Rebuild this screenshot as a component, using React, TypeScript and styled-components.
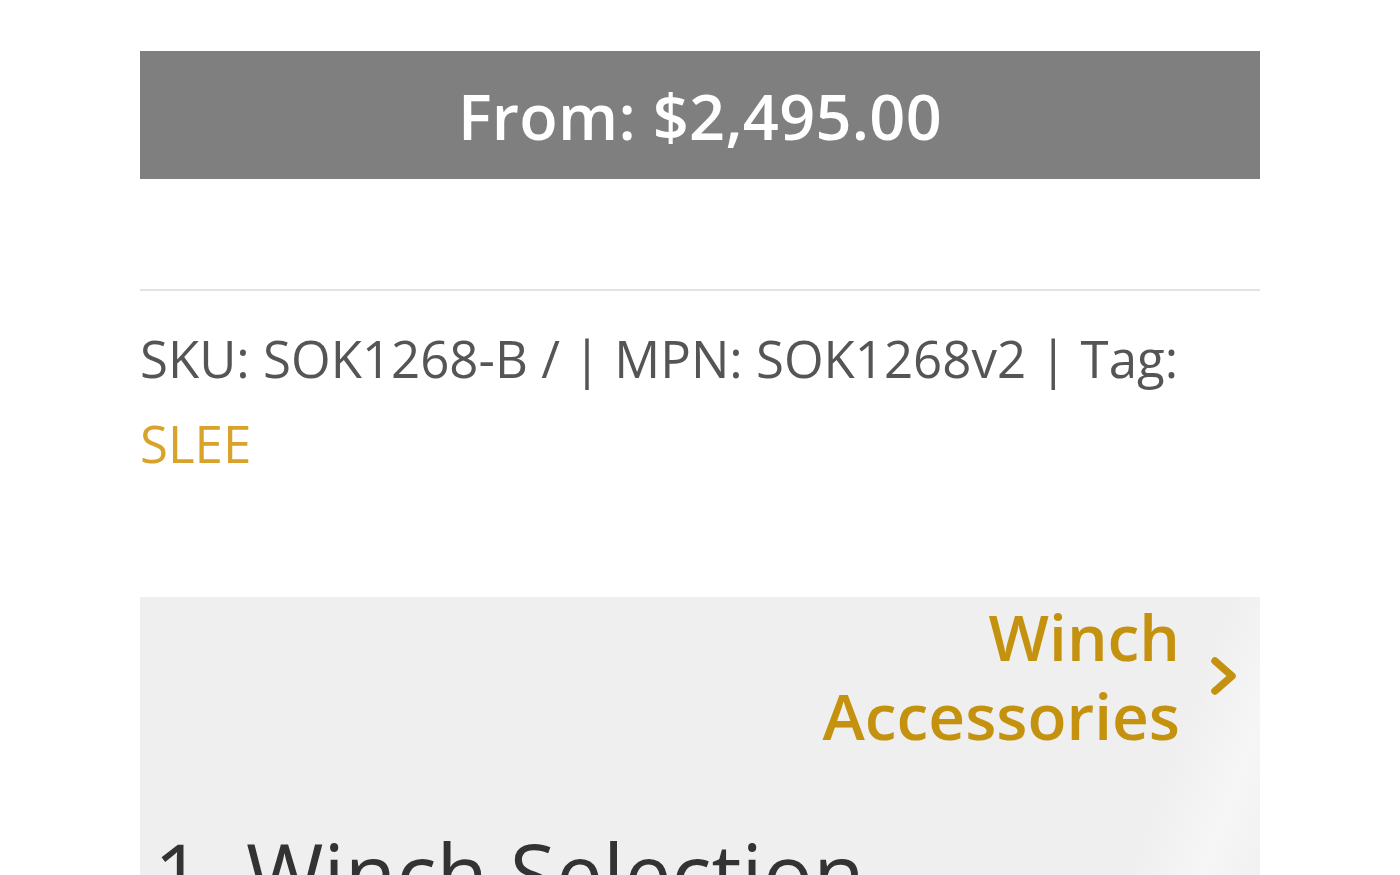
import styled, { createGlobalStyle } from "styled-components";

const GlobalStyle = createGlobalStyle`
  html, body {
    margin: 0;
    padding: 0;
    background: #ffffff;
    font-family: "Open Sans", "Noto Sans", sans-serif;
  }
`;

const Page = styled.div`
  width: 1120px;
  margin: 0 auto;
  padding-top: 51px;
  height: 875px;
  overflow: hidden;
  box-sizing: border-box;
`;

const PriceBar = styled.div`
  height: 128px;
  background: #7f7f7f;
  color: #ffffff;
  display: flex;
  align-items: center;
  justify-content: center;
  font-size: 63px;
  font-weight: 600;
  letter-spacing: 0.3px;
`;

const Divider = styled.hr`
  margin: 110px 0 0;
  border: 0;
  border-top: 2px solid #e2e2e2;
`;

const Meta = styled.p`
  margin: 25px 0 0;
  font-size: 51px;
  line-height: 85px;
  color: #555555;
`;

const TagLink = styled.a`
  color: #d9a22a;
  text-decoration: none;
`;

const Panel = styled.section`
  margin-top: 111px;
  background: linear-gradient(110deg, #efefef 0%, #efefef 86%, #f6f6f6 92%, #efefef 98%);
  padding: 0 20px 0 14px;
  height: 400px;
`;

const NavLink = styled.a`
  display: flex;
  justify-content: flex-end;
  align-items: center;
  gap: 28px;
  color: #c4920e;
  text-decoration: none;
  font-size: 64px;
  font-weight: 600;
  line-height: 79px;
  text-align: right;
`;

const NavText = styled.span`
  display: block;
`;

const Chevron = styled.svg`
  width: 32px;
  height: 42px;
  flex-shrink: 0;
`;

const StepTitle = styled.h2`
  margin: 68px 0 0;
  font-size: 84px;
  font-weight: 400;
  color: #333333;
  line-height: 100px;
  white-space: nowrap;
`;

export default function App() {
  return (
    <>
      <GlobalStyle />
      <Page>
        <PriceBar>From: $2,495.00</PriceBar>
        <Divider />
        <Meta>
          SKU: SOK1268-B / | MPN: SOK1268v2 | Tag: <TagLink href="#">SLEE</TagLink>
        </Meta>
        <Panel>
          <NavLink href="#">
            <NavText>
              Winch
              <br />
              Accessories
            </NavText>
            <Chevron viewBox="0 0 32 42">
              <path d="M7 6 L24 21 L7 36" fill="none" stroke="#c4920e" strokeWidth="7.5" strokeLinecap="round" strokeLinejoin="round" />
            </Chevron>
          </NavLink>
          <StepTitle>1. Winch Selection</StepTitle>
        </Panel>
      </Page>
    </>
  );
}
